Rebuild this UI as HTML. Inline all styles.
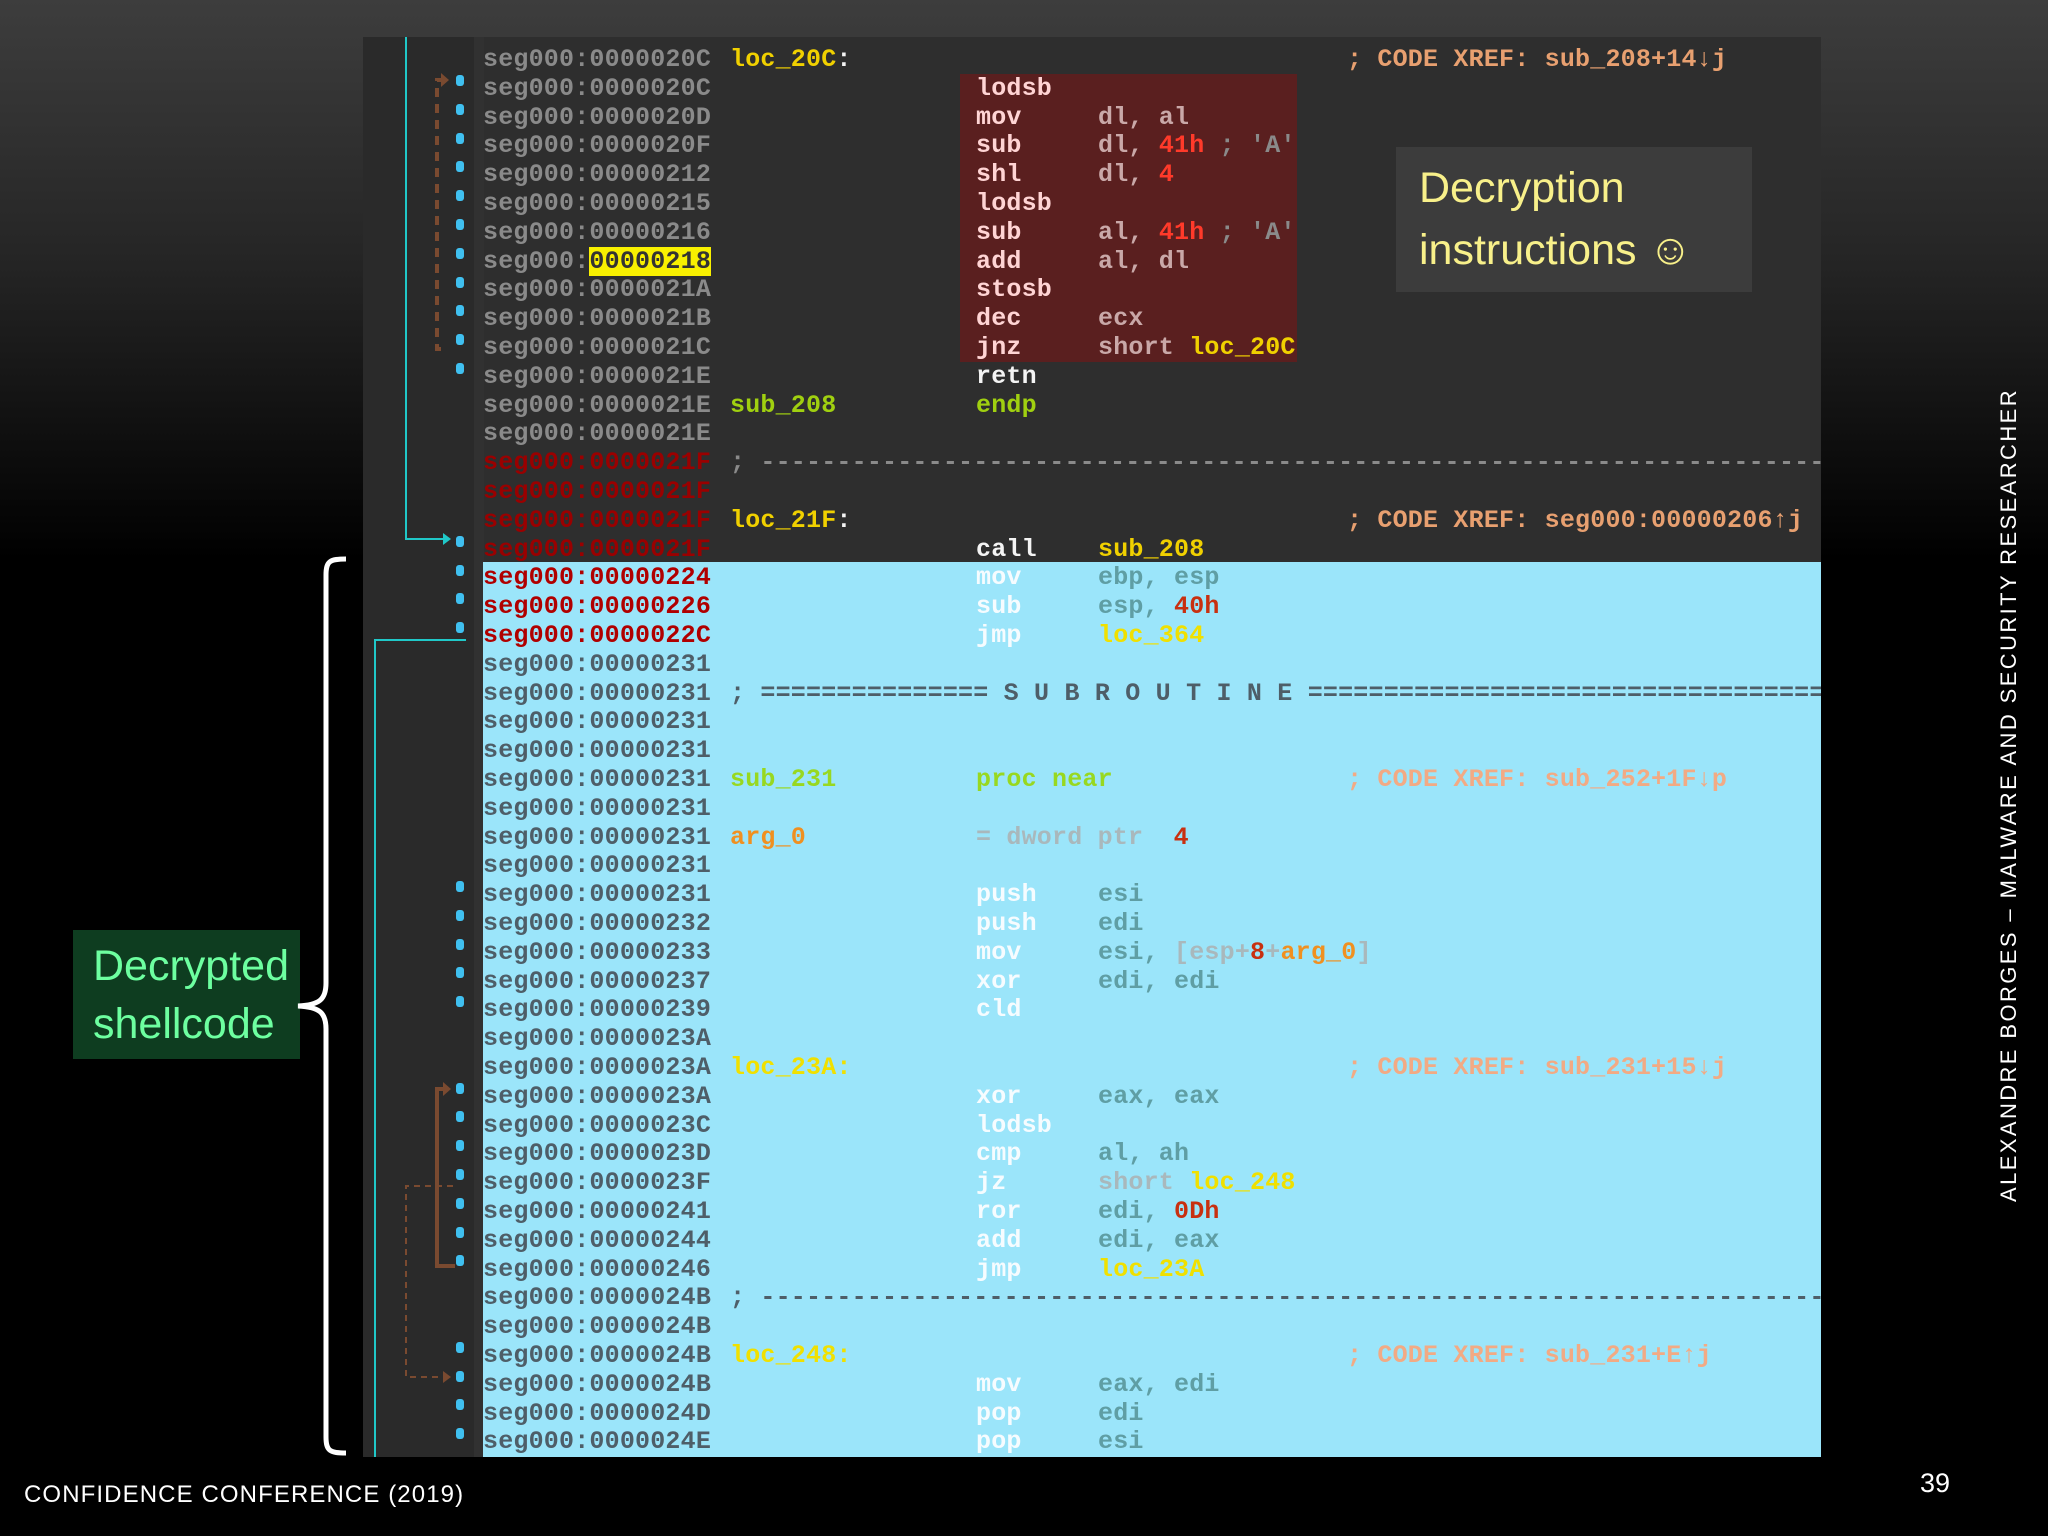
<!DOCTYPE html>
<html><head><meta charset="utf-8"><style>
*{margin:0;padding:0;box-sizing:border-box}
body{width:2048px;height:1536px;overflow:hidden;background:linear-gradient(#3d3d3d 0,#262626 250px,#000 560px,#000 100%);position:relative;font-family:"Liberation Sans",sans-serif}
#panel{position:absolute;left:363px;top:37px;width:1458px;height:1420px;background:#2e2e2e;overflow:hidden}
#gut{position:absolute;left:0;top:0;width:111px;height:100%;background:#2a2a2a}
#strip{position:absolute;left:111px;top:0;width:10px;height:100%;background:#313131}
#red{position:absolute;left:597px;top:37px;width:337px;height:288px;background:#5a1f1f}
#blue{position:absolute;left:120px;top:525px;width:1338px;height:895px;background:#9be5fa}
.r{position:absolute;left:0;width:1458px;height:28.8px;line-height:28.8px;font-family:"Liberation Mono",monospace;font-size:25px;font-weight:bold;letter-spacing:0.2px;white-space:pre}
.r span{position:absolute;top:0}
.r b{font-weight:bold}
.a{left:120px;color:#8a8a8a}
.ab{left:120px;color:#4e5e68}
.ar{left:120px;color:#9a0000}
.arb{left:120px;color:#b00000}
.l{left:367px}
.m{left:613px}
.o{left:735px}
.c{left:984px}
.y{color:#f0d000}.g{color:#a0d010}.w{color:#f4f4f4}.pk{color:#ffd4d4}.po{color:#c9a8a8}.rd{color:#ff3a2a}.gy{color:#8a8a8a}.cm{color:#e8a070}
.mb{color:#f6fcff}.ob{color:#5f9ea4}.yb{color:#f0e000}.cb{color:#f2aa84}.rb{color:#c83010}.gb{color:#a9b8bc}.lg{color:#98d820}.ob2{color:#f09020}
.dot{position:absolute;left:93px;width:8px;height:11px;border-radius:3px;background:#40c0f0}
</style></head><body>
<div id="panel">
<div id="gut"></div><div id="strip"></div>
<div id="red"></div><div id="blue"></div>
<svg width="130" height="1420" style="position:absolute;left:0;top:0">
<polyline points="43,0 43,502 80,502" fill="none" stroke="#20c8c8" stroke-width="2"/>
<polygon points="80,496 88,502 80,508" fill="#20c8c8"/>
<polyline points="103,603 12,603 12,1420" fill="none" stroke="#20c8c8" stroke-width="2"/>
<polyline points="82,43 74,43 74,312 82,312" fill="none" stroke="#7a4a30" stroke-width="4" stroke-dasharray="9,7"/>
<polygon points="78,36 86,43 78,50" fill="#7a4a30"/>
<polyline points="82,1052 74,1052 74,1229 92,1229" fill="none" stroke="#7a4a30" stroke-width="4"/>
<polygon points="80,1045 88,1052 80,1059" fill="#7a4a30"/>
<polyline points="90,1149 43,1149 43,1340 80,1340" fill="none" stroke="#7a4a30" stroke-width="2" stroke-dasharray="6,5"/>
<polygon points="80,1334 88,1340 80,1346" fill="#7a4a30"/>
</svg>
<div class="dot" style="top:38px"></div><div class="dot" style="top:67px"></div><div class="dot" style="top:96px"></div><div class="dot" style="top:124px"></div><div class="dot" style="top:153px"></div><div class="dot" style="top:182px"></div><div class="dot" style="top:211px"></div><div class="dot" style="top:240px"></div><div class="dot" style="top:268px"></div><div class="dot" style="top:297px"></div><div class="dot" style="top:326px"></div>
<div class="dot" style="top:499px"></div><div class="dot" style="top:528px"></div><div class="dot" style="top:556px"></div><div class="dot" style="top:585px"></div>
<div class="dot" style="top:844px"></div><div class="dot" style="top:873px"></div><div class="dot" style="top:902px"></div><div class="dot" style="top:930px"></div><div class="dot" style="top:959px"></div>
<div class="dot" style="top:1046px"></div><div class="dot" style="top:1074px"></div><div class="dot" style="top:1103px"></div><div class="dot" style="top:1132px"></div><div class="dot" style="top:1161px"></div><div class="dot" style="top:1190px"></div><div class="dot" style="top:1218px"></div>
<div class="dot" style="top:1305px"></div><div class="dot" style="top:1334px"></div><div class="dot" style="top:1362px"></div><div class="dot" style="top:1391px"></div>

<div class="r" style="top:9px"><span class="a">seg000:0000020C</span><span class="l y">loc_20C<span class="w" style="position:static">:</span></span><span class="c cm">; CODE XREF: sub_208+14↓j</span></div>
<div class="r" style="top:37.8px"><span class="a">seg000:0000020C</span><span class="m pk">lodsb</span></div>
<div class="r" style="top:66.6px"><span class="a">seg000:0000020D</span><span class="m pk">mov</span><span class="o po">dl, al</span></div>
<div class="r" style="top:95.4px"><span class="a">seg000:0000020F</span><span class="m pk">sub</span><span class="o po">dl, <b class="rd">41h</b> <b class="gy">; 'A'</b></span></div>
<div class="r" style="top:124.2px"><span class="a">seg000:00000212</span><span class="m pk">shl</span><span class="o po">dl, <b class="rd">4</b></span></div>
<div class="r" style="top:153px"><span class="a">seg000:00000215</span><span class="m pk">lodsb</span></div>
<div class="r" style="top:181.8px"><span class="a">seg000:00000216</span><span class="m pk">sub</span><span class="o po">al, <b class="rd">41h</b> <b class="gy">; 'A'</b></span></div>
<div class="r" style="top:210.6px"><span class="a">seg000:<b style="background:#f8f000;color:#333">00000218</b></span><span class="m pk">add</span><span class="o po">al, dl</span></div>
<div class="r" style="top:239.4px"><span class="a">seg000:0000021A</span><span class="m pk">stosb</span></div>
<div class="r" style="top:268.2px"><span class="a">seg000:0000021B</span><span class="m pk">dec</span><span class="o po">ecx</span></div>
<div class="r" style="top:297px"><span class="a">seg000:0000021C</span><span class="m pk">jnz</span><span class="o po">short <b class="y">loc_20C</b></span></div>
<div class="r" style="top:325.8px"><span class="a">seg000:0000021E</span><span class="m w">retn</span></div>
<div class="r" style="top:354.6px"><span class="a">seg000:0000021E</span><span class="l g">sub_208</span><span class="m g">endp</span></div>
<div class="r" style="top:383.4px"><span class="a">seg000:0000021E</span></div>
<div class="r" style="top:412.2px"><span class="ar">seg000:0000021F</span><span class="l gy">; ------------------------------------------------------------------------------</span></div>
<div class="r" style="top:441px"><span class="ar">seg000:0000021F</span></div>
<div class="r" style="top:469.8px"><span class="ar">seg000:0000021F</span><span class="l y">loc_21F<span class="w" style="position:static">:</span></span><span class="c cm">; CODE XREF: seg000:00000206↑j</span></div>
<div class="r" style="top:498.6px"><span class="ar">seg000:0000021F</span><span class="m w">call</span><span class="o y">sub_208</span></div>
<div class="r" style="top:527.4px"><span class="arb">seg000:00000224</span><span class="m mb">mov</span><span class="o ob">ebp, esp</span></div>
<div class="r" style="top:556.2px"><span class="arb">seg000:00000226</span><span class="m mb">sub</span><span class="o ob">esp, <b class="rb">40h</b></span></div>
<div class="r" style="top:585px"><span class="arb">seg000:0000022C</span><span class="m mb">jmp</span><span class="o yb">loc_364</span></div>
<div class="r" style="top:613.8px"><span class="ab">seg000:00000231</span></div>
<div class="r" style="top:642.6px"><span class="ab">seg000:00000231</span><span class="l" style="color:#4e5e68">; =============== S U B R O U T I N E ======================================</span></div>
<div class="r" style="top:671.4px"><span class="ab">seg000:00000231</span></div>
<div class="r" style="top:700.2px"><span class="ab">seg000:00000231</span></div>
<div class="r" style="top:729px"><span class="ab">seg000:00000231</span><span class="l lg">sub_231</span><span class="m lg">proc near</span><span class="c cb">; CODE XREF: sub_252+1F↓p</span></div>
<div class="r" style="top:757.8px"><span class="ab">seg000:00000231</span></div>
<div class="r" style="top:786.6px"><span class="ab">seg000:00000231</span><span class="l ob2">arg_0</span><span class="m gb">= dword ptr  <b class="rb">4</b></span></div>
<div class="r" style="top:815.4px"><span class="ab">seg000:00000231</span></div>
<div class="r" style="top:844.2px"><span class="ab">seg000:00000231</span><span class="m mb">push</span><span class="o ob">esi</span></div>
<div class="r" style="top:873px"><span class="ab">seg000:00000232</span><span class="m mb">push</span><span class="o ob">edi</span></div>
<div class="r" style="top:901.8px"><span class="ab">seg000:00000233</span><span class="m mb">mov</span><span class="o ob">esi, <b class="gb">[esp+<b class="rb">8</b>+<b class="ob2">arg_0</b>]</b></span></div>
<div class="r" style="top:930.6px"><span class="ab">seg000:00000237</span><span class="m mb">xor</span><span class="o ob">edi, edi</span></div>
<div class="r" style="top:959.4px"><span class="ab">seg000:00000239</span><span class="m mb">cld</span></div>
<div class="r" style="top:988.2px"><span class="ab">seg000:0000023A</span></div>
<div class="r" style="top:1017px"><span class="ab">seg000:0000023A</span><span class="l yb">loc_23A:</span><span class="c cb">; CODE XREF: sub_231+15↓j</span></div>
<div class="r" style="top:1045.8px"><span class="ab">seg000:0000023A</span><span class="m mb">xor</span><span class="o ob">eax, eax</span></div>
<div class="r" style="top:1074.6px"><span class="ab">seg000:0000023C</span><span class="m mb">lodsb</span></div>
<div class="r" style="top:1103.4px"><span class="ab">seg000:0000023D</span><span class="m mb">cmp</span><span class="o ob">al, ah</span></div>
<div class="r" style="top:1132.2px"><span class="ab">seg000:0000023F</span><span class="m mb">jz</span><span class="o gb">short <b class="yb">loc_248</b></span></div>
<div class="r" style="top:1161px"><span class="ab">seg000:00000241</span><span class="m mb">ror</span><span class="o ob">edi, <b class="rb">0Dh</b></span></div>
<div class="r" style="top:1189.8px"><span class="ab">seg000:00000244</span><span class="m mb">add</span><span class="o ob">edi, eax</span></div>
<div class="r" style="top:1218.6px"><span class="ab">seg000:00000246</span><span class="m mb">jmp</span><span class="o yb">loc_23A</span></div>
<div class="r" style="top:1247.4px"><span class="ab">seg000:0000024B</span><span class="l" style="color:#4e5e68">; ------------------------------------------------------------------------------</span></div>
<div class="r" style="top:1276.2px"><span class="ab">seg000:0000024B</span></div>
<div class="r" style="top:1305px"><span class="ab">seg000:0000024B</span><span class="l yb">loc_248:</span><span class="c cb">; CODE XREF: sub_231+E↑j</span></div>
<div class="r" style="top:1333.8px"><span class="ab">seg000:0000024B</span><span class="m mb">mov</span><span class="o ob">eax, edi</span></div>
<div class="r" style="top:1362.6px"><span class="ab">seg000:0000024D</span><span class="m mb">pop</span><span class="o ob">edi</span></div>
<div class="r" style="top:1391.4px"><span class="ab">seg000:0000024E</span><span class="m mb">pop</span><span class="o ob">esi</span></div>
</div>

<div style="position:absolute;left:1396px;top:147px;width:356px;height:145px;background:#3c3c3c;color:#f8f08a;font-size:43px;line-height:62px;padding:10px 0 0 23px;font-family:'Liberation Sans Narrow','Liberation Sans',sans-serif">Decryption<br>instructions ☺</div>

<div style="position:absolute;left:73px;top:930px;width:227px;height:129px;background:#0e3d20;color:#6dffa0;font-size:43px;line-height:58px;padding:7px 0 0 20px;font-family:'Liberation Sans Narrow','Liberation Sans',sans-serif">Decrypted<br>shellcode</div>

<svg width="60" height="910" style="position:absolute;left:290px;top:553px">
<path d="M56,6 C40,6 36,8 36,22 L36,430 C36,446 30,452 8,453 C30,454 36,460 36,476 L36,884 C36,898 40,900 56,900" fill="none" stroke="#fff" stroke-width="5"/>
</svg>

<div style="position:absolute;left:2009px;top:795px;transform:translate(-50%,-50%) rotate(-90deg);white-space:nowrap;color:#fff;font-size:22px;letter-spacing:2.4px">ALEXANDRE BORGES – MALWARE AND SECURITY RESEARCHER</div>
<div style="position:absolute;left:24px;top:1481px;color:#fff;font-size:24px;letter-spacing:1.1px">CONFIDENCE CONFERENCE (2019)</div>
<div style="position:absolute;left:1920px;top:1468px;color:#fff;font-size:27px">39</div>
</body></html>
